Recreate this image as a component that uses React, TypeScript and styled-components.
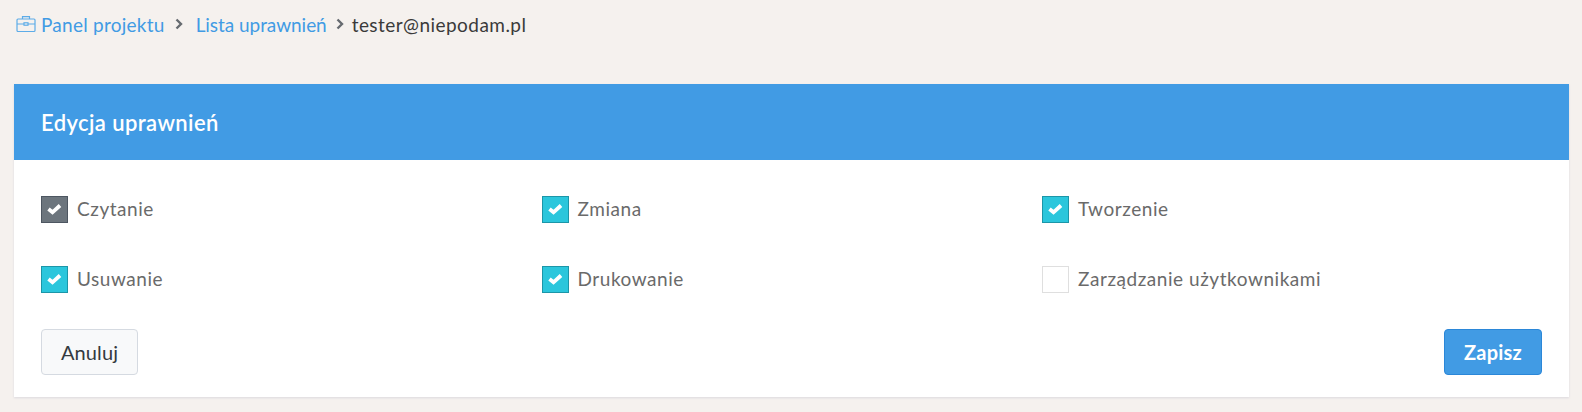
import React from "react";
import styled, { createGlobalStyle } from "styled-components";

const permissions = [
  { label: "Czytanie", state: "locked" },
  { label: "Zmiana", state: "on" },
  { label: "Tworzenie", state: "on" },
  { label: "Usuwanie", state: "on" },
  { label: "Drukowanie", state: "on" },
  { label: "Zarządzanie użytkownikami", state: "off" },
];

export default function App() {
  return (
    <>
      <GlobalStyle />
      <Page>
        <Breadcrumbs>
          <CrumbIcon width="20" height="20" viewBox="0 0 20 20" fill="none" stroke="currentColor" strokeWidth="1.2">
            <rect x="1" y="5" width="18" height="12.5" rx="1" />
            <path d="M6.5 5V2.6h7V5M1 10h7M12 10h7" />
            <rect x="8" y="8.8" width="4" height="2.4" />
          </CrumbIcon>
          <CrumbLink $spacing={0.25}>Panel projektu</CrumbLink>
          <Chevron $left={10} $gap={21}>
            <svg width="8" height="12" viewBox="0 0 8 12" fill="none" stroke="currentColor" strokeWidth="2.4">
              <path d="M1.5 1.5 6 6l-4.500 4.500" />
            </svg>
          </Chevron>
          <CrumbLink $spacing={-0.05}>Lista uprawnień</CrumbLink>
          <Chevron $left={9} $gap={16}>
            <svg width="8" height="12" viewBox="0 0 8 12" fill="none" stroke="currentColor" strokeWidth="2.4">
              <path d="M1.5 1.5 6 6l-4.500 4.500" />
            </svg>
          </Chevron>
          <CrumbCurrent>tester@niepodam.pl</CrumbCurrent>
        </Breadcrumbs>
        <Card>
          <CardHeader>Edycja uprawnień</CardHeader>
          <CardBody>
            <PermissionGrid>
              {permissions.map((item) => (
                <Permission key={item.label}>
                  <Box $state={item.state}>
                    {item.state !== "off" && (
                      <svg width="15" height="12" viewBox="0 0 15 12" fill="none" stroke="#fff" strokeWidth="3.8">
                        <path d="M1.500 6 5.500 9.300 13 2.500" />
                      </svg>
                    )}
                  </Box>
                  <PermissionLabel>{item.label}</PermissionLabel>
                </Permission>
              ))}
            </PermissionGrid>
            <Actions>
              <CancelButton>Anuluj</CancelButton>
              <SaveButton>Zapisz</SaveButton>
            </Actions>
          </CardBody>
        </Card>
      </Page>
    </>
  );
}

const GlobalStyle = createGlobalStyle`
  html, body {
    margin: 0;
    background: #f5f1ee;
  }
  body {
    font-family: "Lato", "Open Sans", sans-serif;
  }
`;

const Page = styled.div`
  padding: 13px 13px 0 14px;
  height: 412px;
  box-sizing: border-box;
  overflow: hidden;
`;

const Breadcrumbs = styled.nav`
  display: flex;
  align-items: center;
  height: 24px;
  padding: 0 0 2px 2px;
  box-sizing: border-box;
  font-size: 19px;
  letter-spacing: 0.45px;
  margin-bottom: 47px;
`;

const CrumbIcon = styled.svg`
  color: #5dace8;
  margin-right: 5px;
`;

const CrumbLink = styled.a<{ $spacing: number }>`
  color: #419be4;
  letter-spacing: ${(p) => p.$spacing}px;
`;

const CrumbCurrent = styled.span`
  color: #3a3a3a;
`;

const Chevron = styled.span<{ $left: number; $gap: number }>`
  display: flex;
  color: #666b70;
  margin-left: ${(p) => p.$left}px;
  width: ${(p) => p.$gap}px;
`;

const Card = styled.section`
  background: #fff;
  box-shadow: 0 1px 2px rgba(120, 130, 160, 0.2);
`;

const CardHeader = styled.h2`
  margin: 0;
  height: 76px;
  display: flex;
  align-items: center;
  padding-left: 27px;
  background: #419be4;
  color: #fff;
  font-size: 22px;
  font-weight: 600;
  letter-spacing: 0.4px;
`;

const CardBody = styled.div`
  padding: 14px 27px 22px 27px;
`;

const PermissionGrid = styled.div`
  display: grid;
  grid-template-columns: repeat(3, 500.5px);
  grid-auto-rows: 70px;
`;

const Permission = styled.label`
  display: flex;
  align-items: center;
  gap: 9px;
  height: 70px;
`;

const boxColors: Record<string, string> = {
  locked: "background:#6c757d;border-color:#4d5661;",
  on: "background:#2bc6dc;border-color:#1c96a8;",
  off: "background:#fff;border-color:#dfdfdf;",
};

const Box = styled.span<{ $state: string }>`
  box-sizing: border-box;
  width: 27px;
  height: 27px;
  display: flex;
  align-items: center;
  justify-content: center;
  border: 1px solid;
  ${(p) => boxColors[p.$state]}
`;

const PermissionLabel = styled.span`
  color: #6a6a6a;
  font-size: 19px;
  letter-spacing: 0.55px;
  padding-bottom: 2px;
`;

const Actions = styled.div`
  display: flex;
  justify-content: space-between;
  margin-top: 15px;
`;

const CancelButton = styled.button`
  box-sizing: border-box;
  width: 97px;
  height: 46px;
  border: 1px solid #d5dae1;
  border-radius: 4px;
  background: #f8f9fa;
  color: #343a40;
  font: 400 20px "Lato", sans-serif;
  letter-spacing: 0.1px;
`;

const SaveButton = styled.button`
  box-sizing: border-box;
  width: 98px;
  height: 46px;
  border: 1px solid #2b87d8;
  border-radius: 4px;
  background: #419be4;
  color: #fff;
  font: 700 20px "Lato", sans-serif;
  letter-spacing: 0.2px;
`;
